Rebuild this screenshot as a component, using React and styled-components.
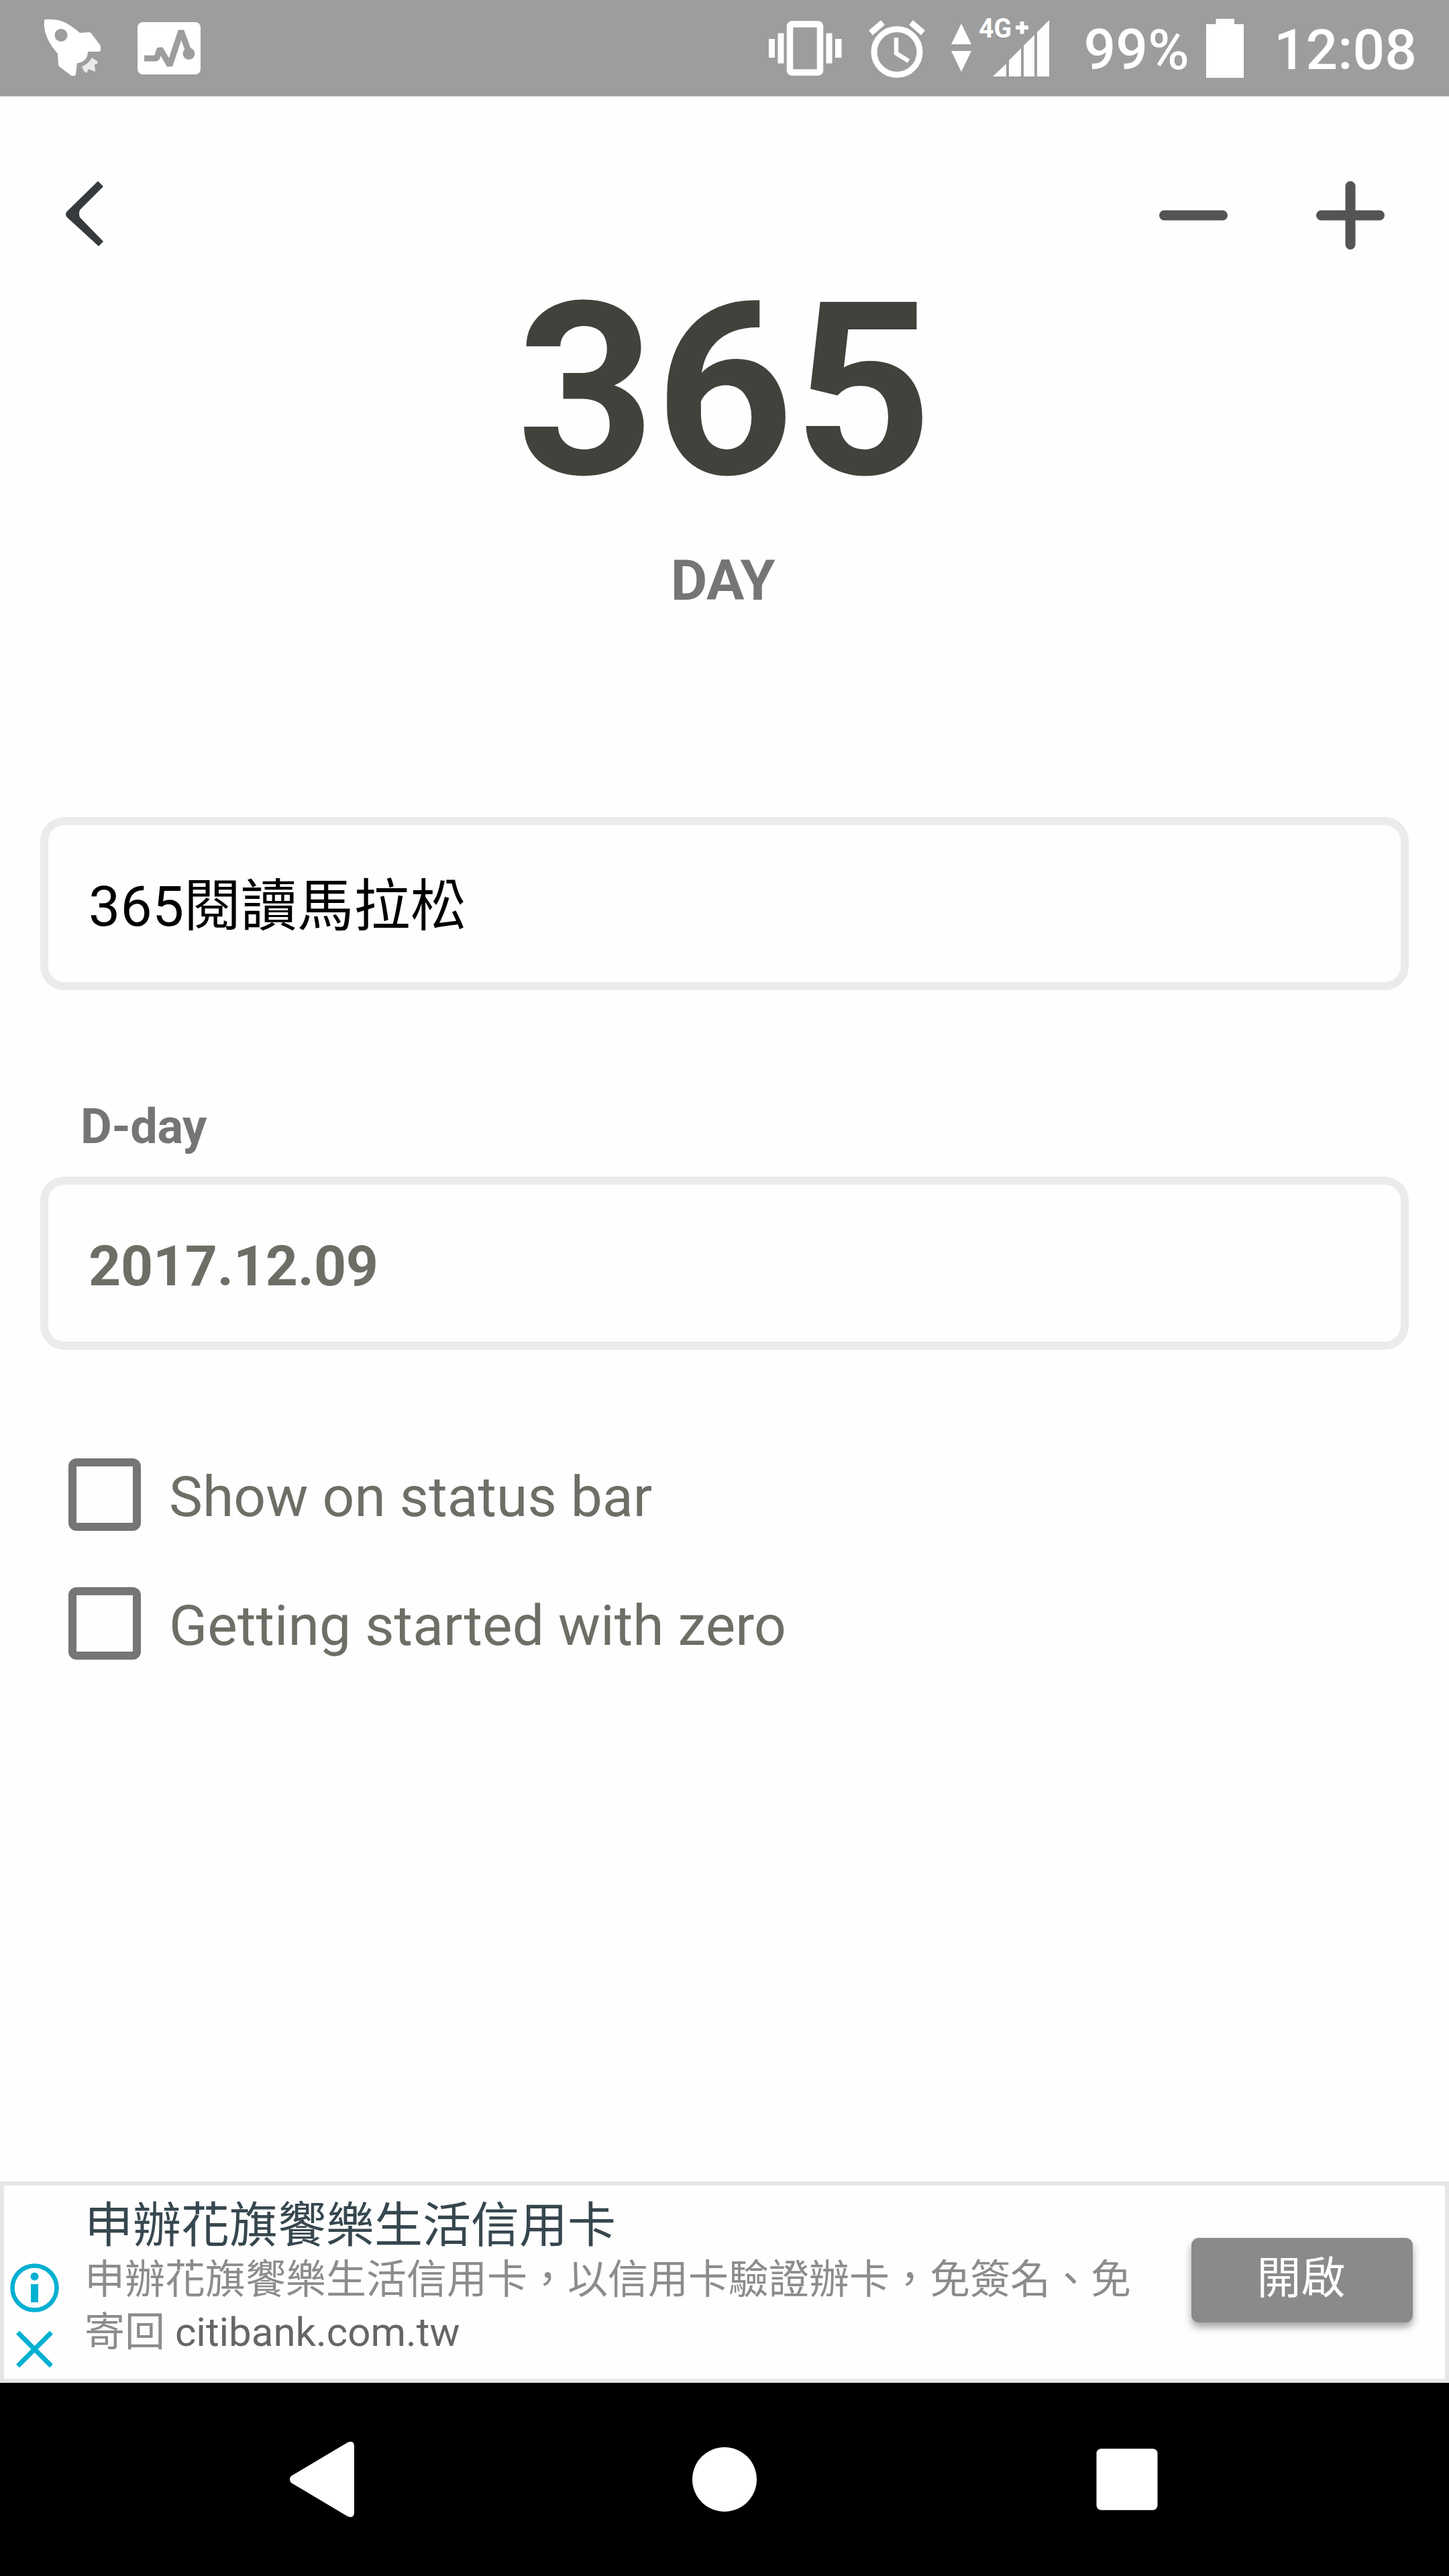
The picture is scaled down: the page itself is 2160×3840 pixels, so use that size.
import React from 'react';
import styled, { createGlobalStyle } from 'styled-components';

const GlobalStyle = createGlobalStyle`
  * { box-sizing: border-box; }
  body {
    margin: 0;
    background: #fefefe;
    font-family: Roboto, "Noto Sans CJK TC", sans-serif;
  }
  svg { display: block; flex: none; }
`;

const Screen = styled.div`
  width: 2160px;
  height: 3840px;
  display: flex;
  flex-direction: column;
  background: #fefefe;
  overflow: hidden;
`;

const StatusBar = styled.header`
  height: 144px;
  flex: none;
  display: flex;
  justify-content: space-between;
  padding: 0 48px 0 60px;
  background: #9d9d9d;
  border-bottom: 1px solid #c4c4c4;
  color: #fff;
`;

const StatusGroup = styled.div`
  display: flex;
  align-items: center;
  gap: ${(p) => p.$gap || 0}px;
  margin-right: ${(p) => p.$after || 0}px;
`;

const StatusText = styled.span`
  font-size: 84px;
  line-height: 84px;
  font-weight: 500;
  white-space: nowrap;
  padding-top: 7px;
  margin: 0 ${(p) => p.$after || 0}px 0 ${(p) => p.$before || 0}px;
`;

const Toolbar = styled.nav`
  height: 289px;
  flex: none;
  display: flex;
  justify-content: space-between;
  align-items: flex-start;
  padding: 114px 84px 0 63px;
`;

const ToolbarActions = styled.div`
  display: flex;
  gap: 108px;
`;

const IconButton = styled.button`
  width: 126px;
  height: 126px;
  display: flex;
  align-items: center;
  justify-content: center;
  padding: 0 0 ${(p) => p.$lift || 0}px;
  border: 0;
  background: none;
`;

const Counter = styled.section`
  height: 785px;
  flex: none;
  display: flex;
  flex-direction: column;
  align-items: center;
  text-align: center;
`;

const Count = styled.div`
  font-size: 360px;
  line-height: 300px;
  font-weight: 700;
  color: #42413c;
`;

const Unit = styled.div`
  margin-top: 83px;
  padding-right: 5px;
  font-size: 84px;
  line-height: 100px;
  font-weight: 700;
  letter-spacing: -0.5px;
  color: #757575;
`;

const Form = styled.main`
  flex: 1;
  display: flex;
  flex-direction: column;
  padding: 0 60px;
`;

const Field = styled.div`
  height: 258px;
  flex: none;
  display: flex;
  align-items: center;
  padding: 9px 60px 0;
  border: 12px solid #ebebeb;
  border-radius: 36px;
  font-size: 84px;
  line-height: 84px;
  font-weight: ${(p) => (p.$bold ? 700 : 400)};
  letter-spacing: ${(p) => (p.$bold ? -0.25 : 0.3)}px;
  color: ${(p) => (p.$bold ? '#6e6e66' : '#000')};
`;

const FieldLabel = styled.label`
  margin: 168px 0 38px 60px;
  font-size: 72px;
  line-height: 72px;
  font-weight: 700;
  letter-spacing: -0.4px;
  color: #757575;
`;

const Options = styled.div`
  display: flex;
  flex-direction: column;
  gap: 84px;
  margin-top: 162px;
  padding-left: 42px;
`;

const Option = styled.label`
  height: 108px;
  display: flex;
  align-items: center;
  gap: 42px;
  color: #6e6e66;
`;

const Checkbox = styled.span`
  width: 108px;
  height: 108px;
  border: 12px solid #757575;
  border-radius: 12px;
`;

const OptionText = styled.span`
  padding-top: 7px;
  font-size: 84px;
  line-height: 84px;
  letter-spacing: 0.08px;
`;

const AdBanner = styled.aside`
  height: 300px;
  flex: none;
  display: flex;
  border: 6px solid #e4e6e8;
  background: #fefefe;
`;

const AdControls = styled.div`
  width: 120px;
  display: flex;
  flex-direction: column;
  gap: 26px;
  padding: 116px 0 0 9px;
`;

const AdCopy = styled.div`
  flex: 1;
  padding-top: 18px;
`;

const AdTitle = styled.div`
  font-size: 72px;
  line-height: 84px;
  color: #37474f;
`;

const AdBody = styled.p`
  margin: 0;
  font-size: 60px;
  line-height: 78px;
  white-space: nowrap;
  color: #8c8c8c;
`;

const AdHost = styled.span`
  color: #666;
`;

const AdButton = styled.button`
  width: 330px;
  height: 126px;
  align-self: flex-start;
  margin: 78px 48px 0 0;
  padding: 0 3px 4px 0;
  border: 0;
  border-radius: 11px;
  background: #8a8a8a;
  box-shadow: 0 7px 12px rgba(0, 0, 0, 0.36);
  font-family: inherit;
  font-size: 66px;
  line-height: 122px;
  color: #fff;
`;

const NavBar = styled.footer`
  height: 288px;
  flex: none;
  display: flex;
  justify-content: center;
  gap: 456px;
  align-items: center;
  background: #000;
`;

const RocketIcon = () => (
  <svg width="98" height="98" viewBox="60 24 98 98">
    <path
      fill="#fff"
      fillRule="evenodd"
      d="M66 31Q66 30 68 30C91 28 104 37 119 50L133 49Q135 49 137 52L149 68Q151 71 150 75Q150 78 147 78L131 78C131 88 125 94 115 95L113 111Q113 114 110 114Q107 115 104 112L88 100Q87 99 87 97L86 81C73 66 64 50 66 31ZM91 44A9.300 9.300 0 1 0 91 63A9.300 9.300 0 1 0 91 44Z"
    />
    <path fill="#e9e9e9" d="M137 87L146 93L145 96L141 97L142 108L132 104L129 110L125 107L122 100Q131 97 137 87Z" />
  </svg>
);

const PulseIcon = () => (
  <svg width="94" height="78" viewBox="205 33 94 78">
    <rect x="205" y="33" width="94" height="78" rx="8" fill="#fff" />
    <path fill="none" stroke="#9d9d9d" strokeWidth="9" strokeLinejoin="bevel" d="M215 87H233.500L238.500 72.500L253 97.500L270 46L282 79" />
    <circle cx="281.500" cy="80" r="9" fill="#9d9d9d" />
  </svg>
);

const VibrateIcon = () => (
  <svg width="110" height="144" viewBox="1145 0 110 144" fill="#fff">
    <path d="M1146 58h9v28h-9zM1159.500 49.500h9v45h-9zM1231.500 49.500h9v45h-9zM1245 58h9.500v28h-9.500z" />
    <rect x="1177.500" y="36" width="45" height="72" rx="3" fill="none" stroke="#fff" strokeWidth="9.500" />
  </svg>
);

const AlarmIcon = () => (
  <svg width="89" height="144" viewBox="1291 0 89 144" fill="none" stroke="#fff">
    <circle cx="1337" cy="77.500" r="34" strokeWidth="9" />
    <path strokeWidth="9" d="M1298 49L1316 33.500M1376 49L1358 33.500" />
    <path strokeWidth="6.500" d="M1336 56V79.500L1354.500 91" />
  </svg>
);

const SignalIcon = () => (
  <svg width="150" height="144" viewBox="1416 0 150 144" fill="#fff">
    <path d="M1433 35L1448 66H1418ZM1433 107L1448 76H1418Z" />
    <path d="M1480 114L1500 95V114ZM1504 114V90L1522 72V114ZM1526 114V68L1542 52V114ZM1546 114V48L1564 30V114Z" />
    <text x="1459" y="55.500" fontSize="41.500" fontWeight="700" textLength="49" lengthAdjust="spacingAndGlyphs">4G</text>
    <path d="M1514 38h6.500v-6h6v6h6.500v6h-6.500v6.500h-6v-6.500h-6.500z" />
  </svg>
);

const BatteryIcon = () => (
  <svg width="56" height="144" viewBox="1798 0 56 144">
    <path fill="#fff" d="M1798 36H1812.500V28H1840V36H1854V116H1798Z" />
  </svg>
);

const BackIcon = () => (
  <svg width="58" height="98" viewBox="97 270 58 98">
    <path fill="#353a3c" d="M98 319Q98 317 100 315L146 270L154 278L119 313Q117 319 119 324L154 360L147 367L100 324Q98 322 98 319Z" />
  </svg>
);

const StepIcon = ({ plus }) => (
  <svg width="102" height="102" viewBox="0 0 102 102" stroke="#545454" strokeWidth="15" strokeLinecap="round">
    <path d={plus ? 'M7.500 51H94.500M51 7.500V94.500' : 'M7.500 51H94.500'} />
  </svg>
);

const InfoIcon = () => (
  <svg width="73" height="73" viewBox="0 0 73 73">
    <circle cx="36.500" cy="36.500" r="33" fill="none" stroke="#00b0d2" strokeWidth="6.500" />
    <circle cx="36.500" cy="19.500" r="6" fill="#00b0d2" />
    <path fill="#00b0d2" d="M31 31h11v27H31z" />
  </svg>
);

const CloseIcon = () => (
  <svg width="73" height="58" viewBox="0 0 73 58">
    <path stroke="#00b0d2" strokeWidth="7" d="M11.500 4L61.500 54M61.500 4L11.500 54" />
  </svg>
);

const options = ['Show on status bar', 'Getting started with zero'];

export default function App() {
  return (
    <Screen>
      <GlobalStyle />
      <StatusBar>
        <StatusGroup $gap={47}>
          <RocketIcon />
          <PulseIcon />
        </StatusGroup>
        <StatusGroup>
          <StatusGroup $gap={36} $after={50}>
            <VibrateIcon />
            <AlarmIcon />
            <SignalIcon />
          </StatusGroup>
          <StatusText $after={25}>99%</StatusText>
          <BatteryIcon />
          <StatusText $before={45}>12:08</StatusText>
        </StatusGroup>
      </StatusBar>
      <Toolbar>
        <IconButton aria-label="Back" $lift={4}>
          <BackIcon />
        </IconButton>
        <ToolbarActions>
          <IconButton aria-label="Decrease">
            <StepIcon />
          </IconButton>
          <IconButton aria-label="Increase">
            <StepIcon plus />
          </IconButton>
        </ToolbarActions>
      </Toolbar>
      <Counter>
        <Count>365</Count>
        <Unit>DAY</Unit>
      </Counter>
      <Form>
        <Field>365閱讀馬拉松</Field>
        <FieldLabel>D-day</FieldLabel>
        <Field $bold>2017.12.09</Field>
        <Options>
          {options.map((text) => (
            <Option key={text}>
              <Checkbox />
              <OptionText>{text}</OptionText>
            </Option>
          ))}
        </Options>
      </Form>
      <AdBanner>
        <AdControls>
          <InfoIcon />
          <CloseIcon />
        </AdControls>
        <AdCopy>
          <AdTitle>申辦花旗饗樂生活信用卡</AdTitle>
          <AdBody>
            申辦花旗饗樂生活信用卡，以信用卡驗證辦卡，免簽名、免
            <br />
            寄回 <AdHost>citibank.com.tw</AdHost>
          </AdBody>
        </AdCopy>
        <AdButton>開啟</AdButton>
      </AdBanner>
      <NavBar>
        <svg width="192" height="120" viewBox="384 3636 192 120">
          <path fill="#fff" d="M434 3691Q430 3696 434 3701L518 3751Q528 3755 528 3745V3647Q528 3637 518 3641Z" />
        </svg>
        <svg width="96" height="96" viewBox="0 0 96 96">
          <circle cx="48" cy="48" r="48" fill="#fff" />
        </svg>
        <svg width="192" height="92" viewBox="1584 3650 192 92">
          <rect x="1634.500" y="3650.300" width="91" height="91.500" rx="7" fill="#fff" />
        </svg>
      </NavBar>
    </Screen>
  );
}
